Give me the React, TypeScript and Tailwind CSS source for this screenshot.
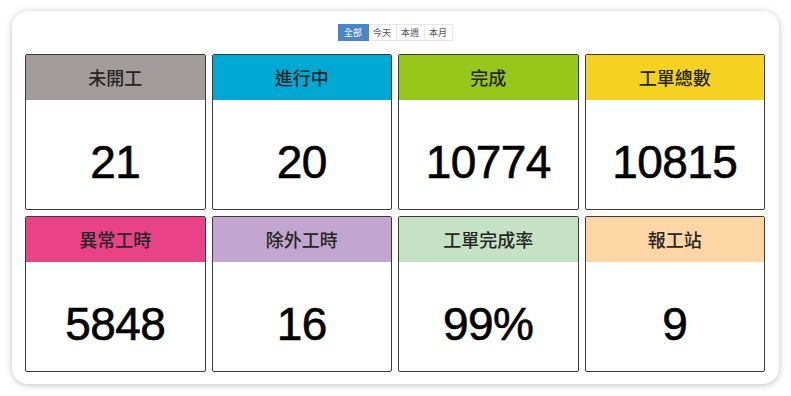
const tabs = ['全部', '今天', '本週', '本月'];

type Stat = {
  label: string;
  value: string;
  color: string;
};

const stats: Stat[] = [
  { label: '未開工', value: '21', color: 'bg-[#a19b9b]' },
  { label: '進行中', value: '20', color: 'bg-[#00a9d4]' },
  { label: '完成', value: '10774', color: 'bg-[#98c71c]' },
  { label: '工單總數', value: '10815', color: 'bg-[#f5d221]' },
  { label: '異常工時', value: '5848', color: 'bg-[#e94285]' },
  { label: '除外工時', value: '16', color: 'bg-[#c2a6d0]' },
  { label: '工單完成率', value: '99%', color: 'bg-[#c5e3c4]' },
  { label: '報工站', value: '9', color: 'bg-[#fcd7a5]' },
];

function StatCard({ label, value, color }: Stat) {
  return (
    <div className="flex h-[156px] flex-col overflow-hidden rounded-[2px] border-[1.5px] border-[#3a3a3a] bg-white">
      <div
        className={`${color} flex h-[45px] shrink-0 items-center justify-center text-[18px] font-medium text-[#262626]`}
        style={{ fontFamily: '"Noto Sans CJK TC", "Noto Sans", sans-serif' }}
      >
        {label}
      </div>
      <div
        className="flex flex-1 items-center justify-center pt-[14px] text-[46px] leading-none tracking-[-0.6px] text-black [-webkit-text-stroke:0.6px_black]"
        style={{ fontFamily: '"Liberation Sans", Arial, sans-serif' }}
      >
        {value}
      </div>
    </div>
  );
}

export default function App() {
  return (
    <div className="h-[396px] w-[791px] bg-white px-[12px] pt-[11px]">
      <div className="h-[373px] rounded-[16px] bg-white pl-[13px] pr-[14px] pt-[13px] shadow-[0_1px_7px_rgba(0,0,0,0.25)]">
        <div className="flex justify-center">
          <div
            className="flex text-[9px]"
            style={{ fontFamily: '"Noto Sans CJK TC", "Noto Sans", sans-serif' }}
          >
            {tabs.map((t, i) => (
              <div
                key={t}
                className={
                  i === 0
                    ? 'flex h-[17px] w-[31px] items-center justify-center bg-[#4a85c8] text-white'
                    : 'flex h-[17px] w-[28px] items-center justify-center border border-l-0 border-[#e6e6e6] text-[#555]'
                }
              >
                {t}
              </div>
            ))}
          </div>
        </div>
        <div className="mt-[13px] grid grid-cols-4 gap-[6px]">
          {stats.map((s) => (
            <StatCard key={s.label} {...s} />
          ))}
        </div>
      </div>
    </div>
  );
}
